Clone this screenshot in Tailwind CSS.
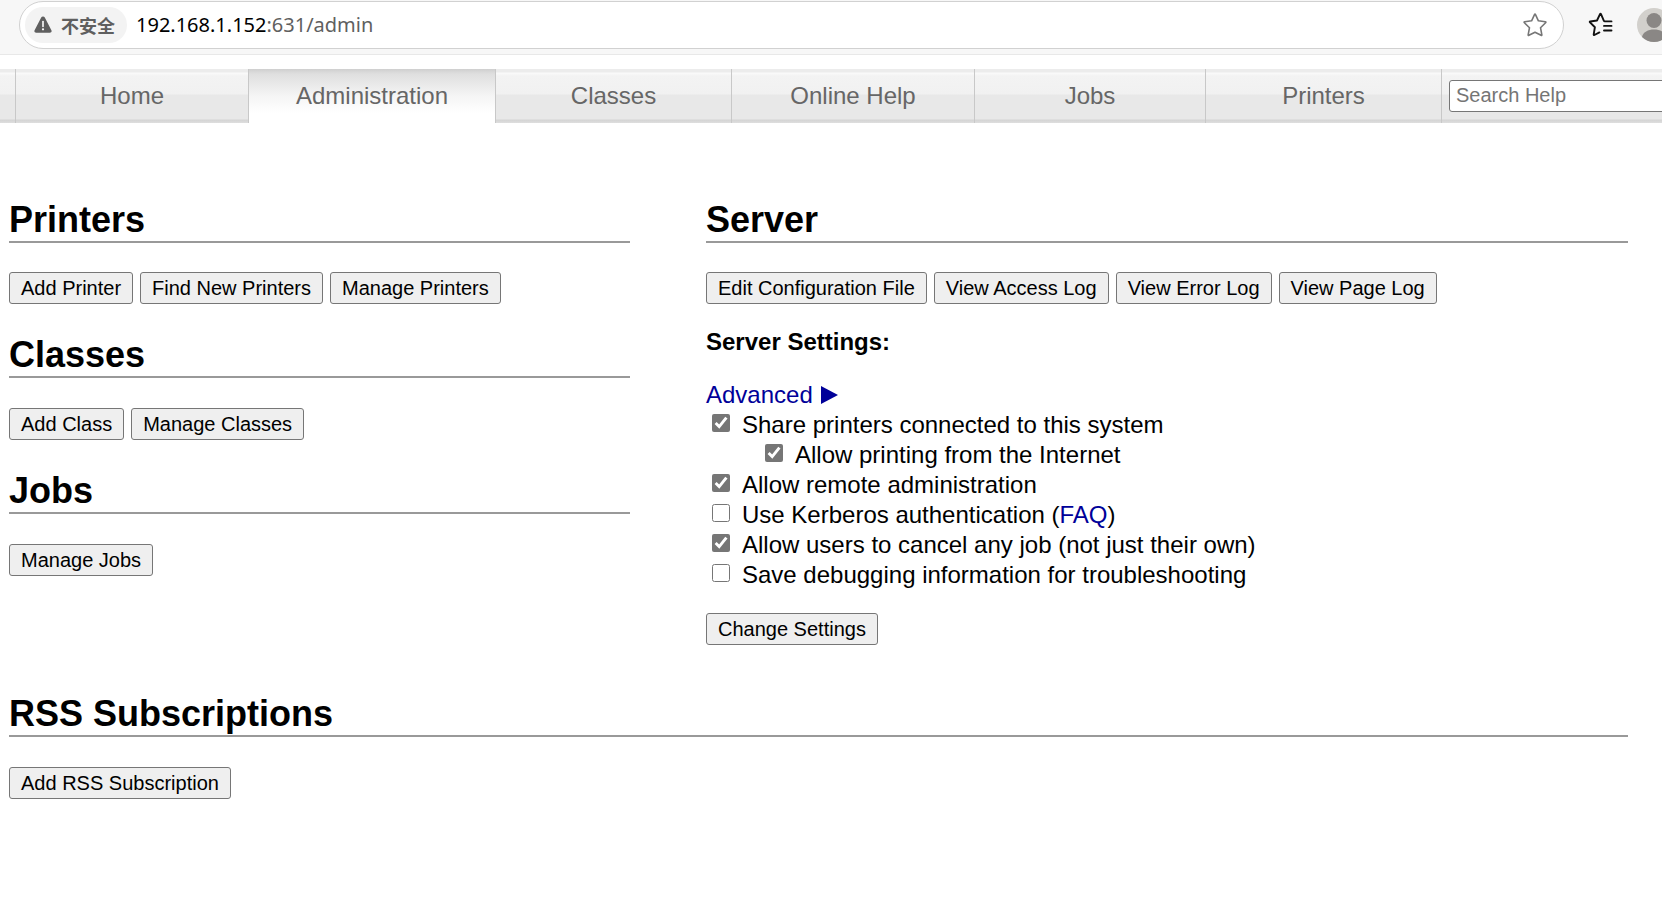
<!DOCTYPE html>
<html lang="en">
<head>
  <meta charset="UTF-8" />
  <meta name="viewport" content="width=device-width, initial-scale=1.0" />
  <title>Administration - CUPS</title>

  <!-- Tailwind CSS -->
  <script src="https://cdn.jsdelivr.net/npm/@tailwindcss/browser@4"></script>
</head>
<body class="min-h-screen overflow-x-hidden bg-white font-['Liberation_Sans',Arial,sans-serif] text-[24px] leading-[30px] text-black">

  <!-- Browser toolbar -->
  <header class="flex h-[55px] items-start overflow-hidden border-b border-[#e8e8e8] bg-[#f7f7f7] pl-[19px] pt-px">
    <div class="flex h-12 min-w-0 flex-1 items-center rounded-full border border-[#d1d1d1] bg-white pl-[5px] pr-4">
      <button type="button" class="flex h-9 items-center gap-[9px] rounded-full bg-[#f3f3f3] pl-[9px] pr-3 font-['Noto_Sans_CJK_SC',sans-serif] text-[18px] leading-6 font-bold text-[#5f5f5f]" lang="zh-CN">
        <svg width="18" height="18" viewBox="0 0 18 18" aria-hidden="true">
          <path d="M9 .5c.8 0 1.400.4 1.800 1.100l6.600 12.600c.7 1.300-.2 2.600-1.600 2.600H2.200C.8 16.800-.1 15.500.6 14.200L7.200 1.600C7.600.9 8.200.5 9 .5z" fill="#5f5f5f"/>
          <path d="M9 5.500v5" stroke="#fff" stroke-width="1.600" stroke-linecap="round"/>
          <circle cx="9" cy="13.300" r="1.100" fill="#fff"/>
        </svg>
        不安全
      </button>
      <div class="ml-[9px] min-w-0 flex-1 font-['Noto_Sans',sans-serif] text-[20px] leading-6 text-[#5f5f5f]"><span class="text-black">192.168.1.152</span>:631/admin</div>
      <button type="button" aria-label="Add to favorites">
        <svg width="24" height="24" viewBox="0 0 24 24" fill="none" stroke="#767676" stroke-width="1.600" stroke-linejoin="round" aria-hidden="true">
          <path d="M11.500 1.600q.5-1 1 0l2.900 6.200 6.900 1q1 .2.300.9l-5.100 5 1.300 7q.2 1-.7.600L12 19.200l-6.100 3.100q-.9.400-.7-.600l1.300-7-5.100-5q-.7-.7.300-.9l6.900-1z"/>
        </svg>
      </button>
    </div>
    <button type="button" aria-label="Favorites" class="ml-6 mt-[11px]">
      <svg width="25" height="25" viewBox="0 0 25 25" fill="none" stroke="#111" stroke-width="1.900" stroke-linecap="round" stroke-linejoin="round" aria-hidden="true">
        <path d="M23.500 9.400h-6.700q-.6 0-.9-.6L13 2.200q-.5-1-1 0L9 8.500l-6.700 1q-1 .2-.3.9l4.900 4.800-1.200 7.200q-.1 1 .7.600l5-2.600M16 13.900h7.500M16 18.500h7.500"/>
      </svg>
    </button>
    <button type="button" aria-label="Profile" class="ml-6 mt-[7px] -mr-[9px]">
      <svg width="34" height="34" viewBox="0 0 34 34" aria-hidden="true">
        <circle cx="17" cy="17" r="17" fill="#d2d0cc"/>
        <circle cx="17" cy="12.500" r="7.500" fill="#8a8785"/>
        <path d="M5 29c1-5 6-7.500 12-7.500S28 24 29 29a17 17 0 0 1-24 0z" fill="#8a8785"/>
      </svg>
    </button>
  </header>

  <!-- Tabs -->
  <nav class="mt-[14px] grid h-[54px] grid-cols-[15fr_233fr_247fr_236fr_243fr_231fr_236fr_221fr] bg-linear-[180deg,#ececec_0,#ececec_3px,#fafafa_4px,#f3f3f3_7px,#f1f1f1_25px,#e8e8e8_26px,#e8e8e8_50px,#d4d4d4_51px,#dedede_54px] leading-[54px] text-[#666]">
    <div></div>
    <a href="#" class="border-l border-[#c8c8c8] text-center">Home</a>
    <a href="#" class="border-l border-[#c8c8c8] bg-linear-[180deg,#cfcfcf_0,#dfdfdf_5px,#f5f5f5_27px,#ffffff_44px] text-center">Administration</a>
    <a href="#" class="border-l border-[#c8c8c8] text-center">Classes</a>
    <a href="#" class="border-l border-[#c8c8c8] text-center">Online Help</a>
    <a href="#" class="border-l border-[#c8c8c8] text-center">Jobs</a>
    <a href="#" class="border-l border-[#c8c8c8] text-center">Printers</a>
    <form class="flex min-w-0 items-start overflow-hidden border-l border-[#c8c8c8] pl-[7px] pt-[11px]">
      <input type="search" aria-label="Search Help" placeholder="Search Help" class="h-8 w-[300px] shrink-0 rounded-[3px] border border-[#767676] bg-white px-1.5 pb-0.5 text-[20px] leading-7 placeholder:text-[#757575]" />
    </form>
  </nav>

  <main class="pt-[76px] pr-[34px] pb-10 pl-[9px]">
    <div class="grid grid-cols-[621fr_922fr] gap-x-[76px]">
      <div class="flex flex-col gap-[30px]">
        <section>
          <h2 class="border-b-2 border-[#999] text-[36px] leading-[42px] font-bold">Printers</h2>
          <div class="mt-[29px] flex gap-[7px]">
            <button class="h-8 rounded-[3px] border border-[#767676] bg-[#efefef] px-[11px] text-[20px] leading-[30px]">Add Printer</button>
            <button class="h-8 rounded-[3px] border border-[#767676] bg-[#efefef] px-[11px] text-[20px] leading-[30px]">Find New Printers</button>
            <button class="h-8 rounded-[3px] border border-[#767676] bg-[#efefef] px-[11px] text-[20px] leading-[30px]">Manage Printers</button>
          </div>
        </section>
        <section>
          <h2 class="border-b-2 border-[#999] text-[36px] leading-[42px] font-bold">Classes</h2>
          <div class="mt-[30px] flex gap-[7px]">
            <button class="h-8 rounded-[3px] border border-[#767676] bg-[#efefef] px-[11px] text-[20px] leading-[30px]">Add Class</button>
            <button class="h-8 rounded-[3px] border border-[#767676] bg-[#efefef] px-[11px] text-[20px] leading-[30px]">Manage Classes</button>
          </div>
        </section>
        <section>
          <h2 class="border-b-2 border-[#999] text-[36px] leading-[42px] font-bold">Jobs</h2>
          <div class="mt-[30px] flex gap-[7px]">
            <button class="h-8 rounded-[3px] border border-[#767676] bg-[#efefef] px-[11px] text-[20px] leading-[30px]">Manage Jobs</button>
          </div>
        </section>
      </div>

      <section>
        <h2 class="border-b-2 border-[#999] text-[36px] leading-[42px] font-bold">Server</h2>
        <div class="mt-[29px] flex gap-[7px]">
          <button class="h-8 rounded-[3px] border border-[#767676] bg-[#efefef] px-[11px] text-[20px] leading-[30px]">Edit Configuration File</button>
          <button class="h-8 rounded-[3px] border border-[#767676] bg-[#efefef] px-[11px] text-[20px] leading-[30px]">View Access Log</button>
          <button class="h-8 rounded-[3px] border border-[#767676] bg-[#efefef] px-[11px] text-[20px] leading-[30px]">View Error Log</button>
          <button class="h-8 rounded-[3px] border border-[#767676] bg-[#efefef] px-[11px] text-[20px] leading-[30px]">View Page Log</button>
        </div>

        <!-- Server settings form -->
        <form class="mt-[23px]">
          <p class="mb-[23px] font-bold">Server Settings:</p>
          <a href="#" class="flex items-center gap-2 text-[#000099]">Advanced
            <svg width="17" height="18" viewBox="0 0 17 18" fill="currentColor" aria-hidden="true"><path d="M0 0l17 9-17 9z"/></svg>
          </a>
          <div class="flex items-start gap-3 pl-1.5">
            <input type="checkbox" id="share" checked class="mt-1 size-[18px] accent-[#767676]" />
            <label for="share">Share printers connected to this system</label>
          </div>
          <div class="flex items-start gap-3 pl-[59px]">
            <input type="checkbox" id="internet" checked class="mt-1 size-[18px] accent-[#767676]" />
            <label for="internet">Allow printing from the Internet</label>
          </div>
          <div class="flex items-start gap-3 pl-1.5">
            <input type="checkbox" id="remote" checked class="mt-1 size-[18px] accent-[#767676]" />
            <label for="remote">Allow remote administration</label>
          </div>
          <div class="flex items-start gap-3 pl-1.5">
            <input type="checkbox" id="kerberos" class="mt-1 size-[18px] accent-[#767676]" />
            <label for="kerberos">Use Kerberos authentication (<a href="#" class="text-[#000099]">FAQ</a>)</label>
          </div>
          <div class="flex items-start gap-3 pl-1.5">
            <input type="checkbox" id="cancel" checked class="mt-1 size-[18px] accent-[#767676]" />
            <label for="cancel">Allow users to cancel any job (not just their own)</label>
          </div>
          <div class="flex items-start gap-3 pl-1.5">
            <input type="checkbox" id="debug" class="mt-1 size-[18px] accent-[#767676]" />
            <label for="debug">Save debugging information for troubleshooting</label>
          </div>
          <button type="button" class="mt-[23px] block h-8 rounded-[3px] border border-[#767676] bg-[#efefef] px-[11px] text-[20px] leading-[30px]">Change Settings</button>
        </form>
      </section>
    </div>

    <section class="mt-12">
      <h2 class="border-b-2 border-[#999] text-[36px] leading-[42px] font-bold">RSS Subscriptions</h2>
      <div class="mt-[30px] flex gap-[7px]">
        <button class="h-8 rounded-[3px] border border-[#767676] bg-[#efefef] px-[11px] text-[20px] leading-[30px]">Add RSS Subscription</button>
      </div>
    </section>
  </main>
</body>
</html>
